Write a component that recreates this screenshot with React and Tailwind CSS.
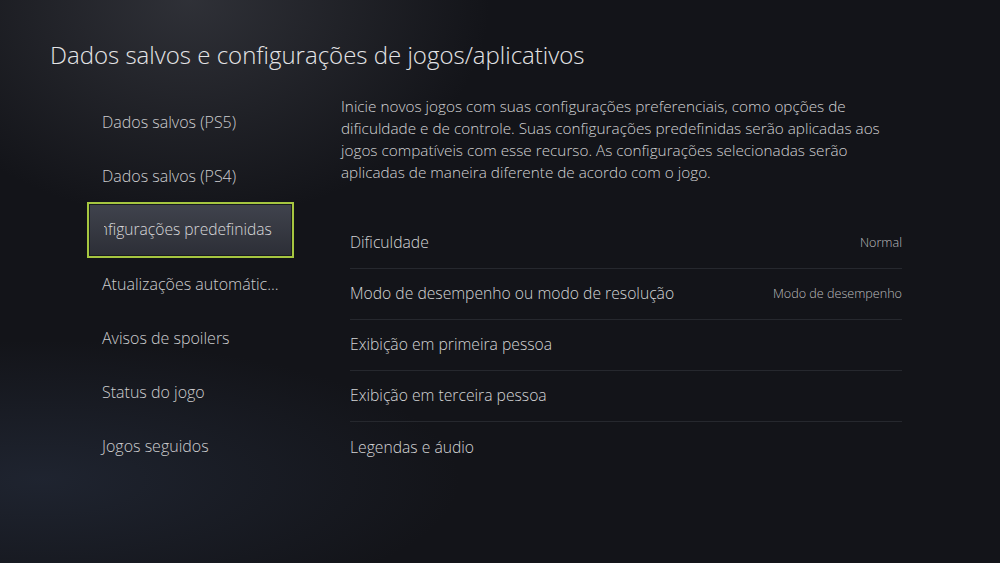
import React from 'react';

const menu = [
  'Dados salvos (PS5)',
  'Dados salvos (PS4)',
  'Configurações predefinidas',
  'Atualizações automátic...',
  'Avisos de spoilers',
  'Status do jogo',
  'Jogos seguidos',
];

const rows = [
  { label: 'Dificuldade', value: 'Normal' },
  { label: 'Modo de desempenho ou modo de resolução', value: 'Modo de desempenho' },
  { label: 'Exibição em primeira pessoa' },
  { label: 'Exibição em terceira pessoa' },
  { label: 'Legendas e áudio' },
];

const App = () => {
  return (
    <div
      className="w-[1000px] h-[563px] overflow-hidden bg-[#131419] bg-[radial-gradient(ellipse_300px_220px_at_190px_0px,rgba(70,72,80,0.55),transparent),radial-gradient(ellipse_420px_140px_at_40px_480px,rgba(45,55,75,0.45),transparent)] text-[#d4d4d6]"
      style={{ fontFamily: '"Open Sans", "Noto Sans", sans-serif' }}
    >
      <div className="px-[50px] pt-[39px]">
        <h1 className="text-[24px] leading-[32px] font-light text-[#e4e4e6]">
          Dados salvos e configurações de jogos/aplicativos
        </h1>

        <div className="flex mt-[24px]">
          <div className="ml-[37px] w-[207px] flex flex-col">
            {menu.map((item, i) =>
              i === 2 ? (
                <div
                  key={i}
                  className="h-[56px] -my-[1px] flex items-center border-2 border-[#a6c640] shadow-[inset_0_0_0_1px_#1a1c20] bg-[linear-gradient(180deg,#40434d,#2c2e36)]"
                >
                  <div className="ml-[15px] overflow-hidden whitespace-nowrap w-[180px]">
                    <span className="block text-[15.6px] font-light text-[#d8d8da] ml-[-24px]">{item}</span>
                  </div>
                </div>
              ) : (
                <div key={i} className="h-[54px] flex items-center px-[15px] text-[16px] font-light whitespace-nowrap text-[#cdcdcf]">
                  {item}
                </div>
              )
            )}
          </div>

          <div className="ml-[47px] w-[561px]">
            <p className="text-[15.3px] leading-[22px] font-light text-[#d2d2d4] whitespace-nowrap">
              Inicie novos jogos com suas configurações preferenciais, como opções de
              <br />
              dificuldade e de controle. Suas configurações predefinidas serão aplicadas aos
              <br />
              jogos compatíveis com esse recurso. As configurações selecionadas serão
              <br />
              aplicadas de maneira diferente de acordo com o jogo.
            </p>

            <div className="mt-[35px] pl-[9px]">
              {rows.map((r, i) => (
                <div
                  key={i}
                  className={`h-[51px] flex items-center justify-between ${i < rows.length - 1 ? 'border-b border-[#26282e]' : ''}`}
                >
                  <span className="text-[15.7px] font-light text-[#d4d4d6]">{r.label}</span>
                  {r.value && <span className="text-[12.6px] font-light text-[#bcbcbe]">{r.value}</span>}
                </div>
              ))}
            </div>
          </div>
        </div>
      </div>
    </div>
  );
};

export default App;
